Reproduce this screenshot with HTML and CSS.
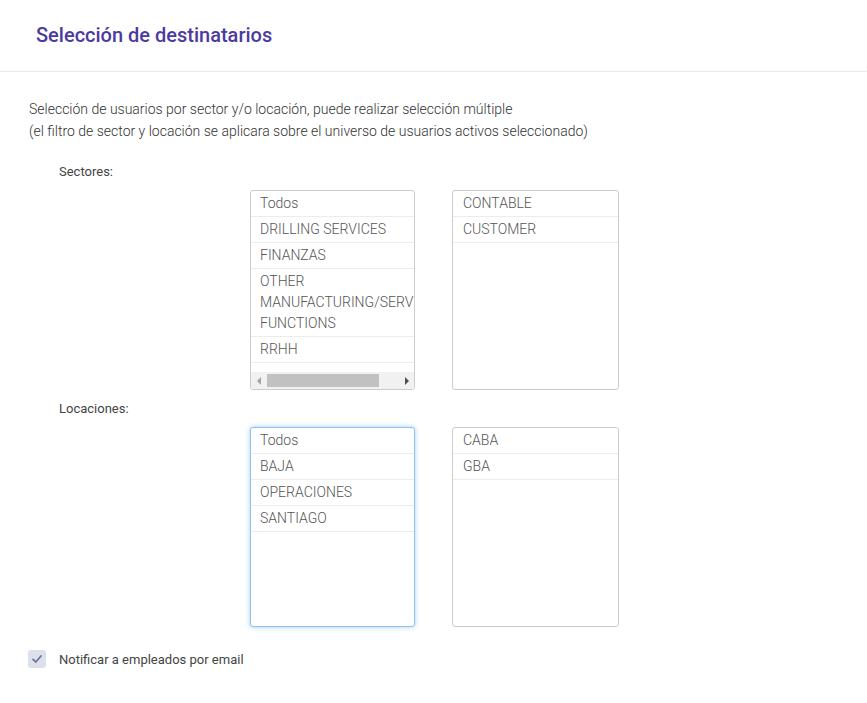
FILE: index.html
```html
<!DOCTYPE html>
<html lang="es">
<head>
<meta charset="utf-8">
<title>Selección de destinatarios</title>
<link rel="stylesheet" href="styles.css">
</head>
<body>
<header class="header">
  <h1 class="title">Selección de destinatarios</h1>
</header>
<main class="content">
  <p class="desc">Selección de usuarios por sector y/o locación, puede realizar selección múltiple<br>(el filtro de sector y locación se aplicara sobre el universo de usuarios activos seleccionado)</p>

  <div class="field-label field-first">Sectores:</div>
  <div class="lists">
    <div class="listbox">
      <div class="viewport">
        <div class="wide">
          <div class="item">Todos</div>
          <div class="item">DRILLING SERVICES</div>
          <div class="item">FINANZAS</div>
          <div class="item">OTHER MANUFACTURING/SERVICE FUNCTIONS</div>
          <div class="item">RRHH</div>
        </div>
      </div>
      <div class="hscroll">
        <span class="arrow arrow-left"></span>
        <span class="track"><span class="thumb"></span></span>
        <span class="arrow arrow-right"></span>
      </div>
    </div>
    <div class="listbox">
      <div class="item">CONTABLE</div>
      <div class="item">CUSTOMER</div>
    </div>
  </div>

  <div class="field-label">Locaciones:</div>
  <div class="lists">
    <div class="listbox focused">
      <div class="item">Todos</div>
      <div class="item">BAJA</div>
      <div class="item">OPERACIONES</div>
      <div class="item">SANTIAGO</div>
    </div>
    <div class="listbox">
      <div class="item">CABA</div>
      <div class="item">GBA</div>
    </div>
  </div>

  <label class="check-row">
    <span class="checkbox">
      <svg width="12" height="12" viewBox="0 0 12 12"><path d="M2 6.3 L4.8 9 L10 3" fill="none" stroke="#6b7092" stroke-width="1.7" stroke-linecap="round" stroke-linejoin="round"/></svg>
    </span>
    <span class="check-label">Notificar a empleados por email</span>
  </label>
</main>
</body>
</html>
```
FILE: styles.css
```css
* { box-sizing: border-box; }
body {
  margin: 0;
  font-family: Roboto, "Liberation Sans", sans-serif;
  background: #fff;
  color: #555;
}
.header {
  height: 72px;
  border-bottom: 1px solid #e9e9e9;
  display: flex;
  align-items: center;
  padding-left: 36px;
  padding-bottom: 2px;
}
.title {
  margin: 0;
  font-size: 20px;
  font-weight: 500;
  color: #4b3b9f;
}
.content {
  padding: 0 29px;
}
.desc {
  margin: 26px 0 0;
  font-size: 14px;
  font-weight: 300;
  line-height: 22px;
  color: #333;
}
.field-label {
  margin-top: 10px;
  padding-left: 30px;
  font-size: 13px;
  line-height: 18px;
  color: #444;
}
.field-first { margin-top: 21px; }
.lists {
  display: flex;
  gap: 37px;
  margin-top: 9px;
  padding-left: 221px;
}
.listbox {
  width: 165px;
  height: 200px;
  border: 1px solid #cccccc;
  border-radius: 3px;
  background: #fff;
  overflow: hidden;
  display: flex;
  flex-direction: column;
}
.listbox + .listbox { width: 167px; }
.listbox + .listbox .item { padding-left: 10px; }
.focused {
  border-color: #8ec3f1;
  box-shadow: 0 0 5px rgba(102, 175, 233, 0.6);
}
.viewport {
  flex: 1;
  overflow: hidden;
}
.wide { width: 200px; }
.item {
  padding: 2px 9px;
  font-size: 14px;
  font-weight: 300;
  line-height: 21px;
  color: #555;
  border-bottom: 1px solid #ececec;
}
.hscroll {
  height: 17px;
  background: #f1f1f1;
  display: flex;
  align-items: center;
  flex: none;
}
.arrow {
  width: 15px;
  height: 17px;
  display: flex;
  align-items: center;
  justify-content: center;
}
.arrow::after {
  content: "";
  width: 0;
  height: 0;
  border-top: 4px solid transparent;
  border-bottom: 4px solid transparent;
}
.arrow-left::after { border-right: 4px solid #a3a3a3; }
.arrow-right::after { border-left: 4px solid #505050; }
.track {
  flex: 1;
  height: 13px;
  display: flex;
}
.thumb {
  margin-left: 1px;
  width: 112px;
  height: 13px;
  background: #c1c1c1;
}
.check-row {
  display: flex;
  align-items: center;
  gap: 13px;
  margin-top: 23px;
  margin-left: -1px;
}
.checkbox {
  width: 18px;
  height: 18px;
  border-radius: 3px;
  background: #dcdfec;
  display: flex;
  align-items: center;
  justify-content: center;
}
.check-label {
  font-size: 13px;
  color: #444;
}
```
